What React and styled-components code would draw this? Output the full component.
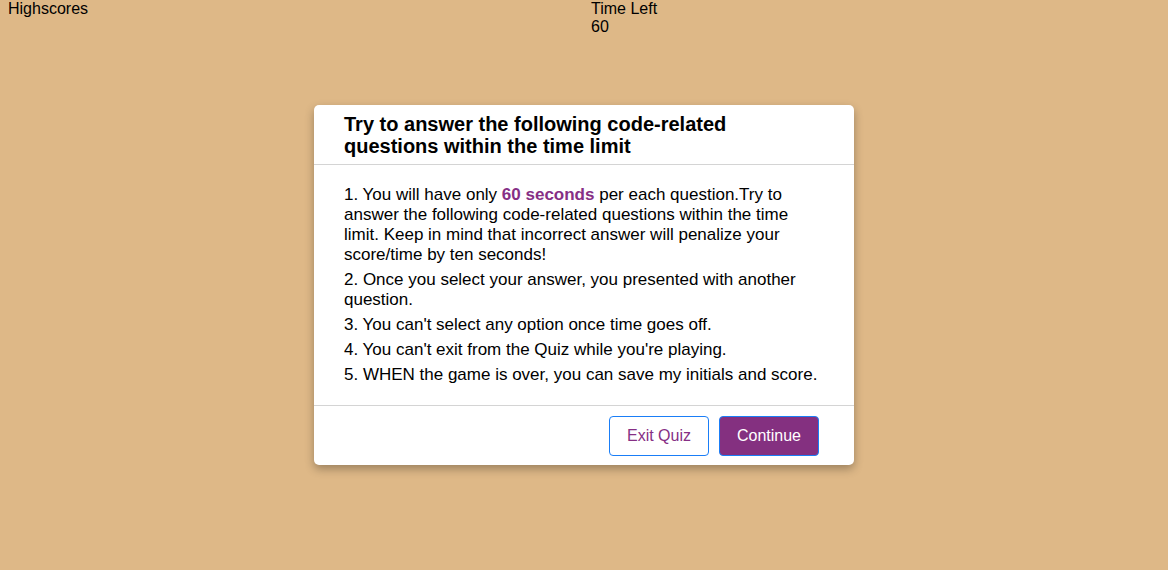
import React from "react";
import styled, { createGlobalStyle } from "styled-components";

const GlobalStyle = createGlobalStyle`
  html, body {
    margin: 0;
    padding: 0;
    background: #deb887;
    font-family: "Liberation Sans", Arial, sans-serif;
    font-size: 16px;
    color: #000;
  }
`;

const Page = styled.div`
  min-height: 570px;
  background: #deb887;
`;

const Header = styled.header`
  display: grid;
  grid-template-columns: 583px 1fr;
  padding: 0 8px;
  line-height: 18px;
`;

const HeaderItem = styled.div`
  display: flex;
  flex-direction: column;
`;

const Modal = styled.section`
  width: 540px;
  margin: 69px auto 0;
  background: #fff;
  border-radius: 5px;
  box-shadow: 0 4px 10px rgba(0, 0, 0, 0.3);
`;

const ModalHeader = styled.div`
  padding: 8px 30px 7px;
  border-bottom: 1px solid #d4d4d4;
`;

const Title = styled.h2`
  margin: 0;
  font-size: 20px;
  line-height: 22px;
  font-weight: bold;
`;

const ModalBody = styled.div`
  padding: 20px 30px 20px;
  display: flex;
  flex-direction: column;
  gap: 5px;
  border-bottom: 1px solid #d4d4d4;
`;

const Rule = styled.p`
  margin: 0;
  font-size: 17px;
  line-height: 20px;
`;

const Highlight = styled.span`
  color: #862f85;
  font-weight: bold;
`;

const ModalFooter = styled.div`
  display: flex;
  justify-content: flex-end;
  gap: 10px;
  padding: 10px 35px 9px;
`;

const Button = styled.button`
  width: 100px;
  height: 40px;
  border: 1px solid #1a7ef7;
  border-radius: 4px;
  font-family: "Liberation Sans", Arial, sans-serif;
  font-size: 16px;
  cursor: pointer;
  background: ${(p) => (p.$primary ? "#843080" : "#fff")};
  color: ${(p) => (p.$primary ? "#fff" : "#862f85")};
`;

const App = () => {
  return (
    <Page>
      <GlobalStyle />
      <Header>
        <HeaderItem>Highscores</HeaderItem>
        <HeaderItem>
          <span>Time Left</span>
          <span>60</span>
        </HeaderItem>
      </Header>
      <Modal>
        <ModalHeader>
          <Title>
            Try to answer the following code-related
            <br />
            questions within the time limit
          </Title>
        </ModalHeader>
        <ModalBody>
          <Rule>
            1. You will have only <Highlight>60 seconds</Highlight> per each
            question.Try to answer the following code-related questions within
            the time limit. Keep in mind that incorrect answer will penalize
            your score/time by ten seconds!
          </Rule>
          <Rule>
            2. Once you select your answer, you presented with another
            question.
          </Rule>
          <Rule>3. You can't select any option once time goes off.</Rule>
          <Rule>4. You can't exit from the Quiz while you're playing.</Rule>
          <Rule>5. WHEN the game is over, you can save my initials and score.</Rule>
        </ModalBody>
        <ModalFooter>
          <Button>Exit Quiz</Button>
          <Button $primary>Continue</Button>
        </ModalFooter>
      </Modal>
    </Page>
  );
};

export default App;
